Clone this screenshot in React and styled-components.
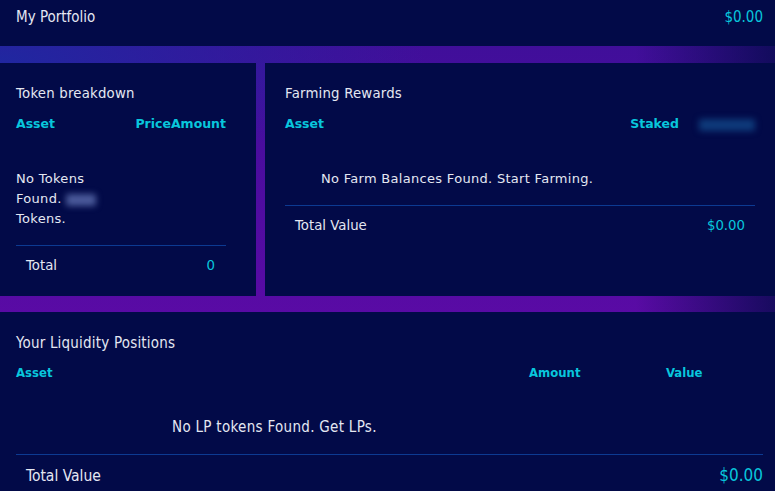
import React from 'react'
import styled, { createGlobalStyle } from 'styled-components'

const GlobalStyle = createGlobalStyle`
  html, body {
    margin: 0;
    padding: 0;
    background: #020a48;
  }
  * { box-sizing: border-box; }
`

const CYAN = '#08c6dc'
const PANEL = '#020a48'
const TEXT = '#e4e7f2'
const LINE = '#0c3a92'
const CONDENSED = '"DejaVu Sans Condensed", "DejaVu Sans", sans-serif'
const WIDE = '"DejaVu Sans", "Open Sans", sans-serif'

const Page = styled.div`
  width: 775px;
  min-height: 491px;
  display: flex;
  flex-direction: column;
  overflow: hidden;
  background:
    linear-gradient(to right, rgba(2, 10, 72, 0) 82%, rgba(2, 10, 72, 0.75) 100%),
    radial-gradient(ellipse 55% 22% at 0% 12%, rgba(30, 40, 160, 0.95), rgba(30, 40, 160, 0)),
    linear-gradient(to bottom, #3c0f98 0%, #6a08ac 100%);
`

const Header = styled.header`
  height: 46px;
  background: ${PANEL};
  display: flex;
  justify-content: space-between;
  padding: 8px 12px 0 16px;
  font-family: ${CONDENSED};
  font-size: 15px;
  line-height: 18px;
  color: ${TEXT};
`

const Money = styled.span`
  color: ${CYAN};
  font-size: ${(p) => (p.$size ? `${p.$size}px` : 'inherit')};
`

const Middle = styled.div`
  display: grid;
  grid-template-columns: 256px 1fr;
  column-gap: 9px;
  margin: 17px 0 16px;
  height: 233px;
`

const Panel = styled.section`
  background: ${PANEL};
  padding: 22px ${(p) => p.$right}px 0 ${(p) => p.$left}px;
  font-family: ${(p) => (p.$condensed ? CONDENSED : WIDE)};
  font-size: ${(p) => (p.$condensed ? 15 : 13.3)}px;
  color: ${TEXT};
`

const Bottom = styled(Panel)`
  flex: 1;
  padding-top: 22px;
`

const Title = styled.div`
  line-height: 18px;
  letter-spacing: 0.2px;
`

const HeadRow = styled.div`
  display: grid;
  grid-template-columns: ${(p) => p.$cols};
  margin-top: 12px;
  line-height: 18px;
  font-size: ${(p) => p.$size || 12.5}px;
  color: ${CYAN};
  font-weight: bold;
`

const Cell = styled.span`
  text-align: ${(p) => p.$align || 'left'};
`

const Empty = styled.div`
  margin-top: ${(p) => p.$top}px;
  padding-left: ${(p) => p.$indent || 0}px;
  line-height: 20px;
  letter-spacing: 0.3px;
  font-size: ${(p) => p.$size || 13}px;
  width: ${(p) => p.$width || 'auto'};
`

const Redacted = styled.span`
  display: inline-block;
  vertical-align: middle;
  width: ${(p) => p.$w}px;
  height: 12px;
  margin-left: ${(p) => p.$ml || 0}px;
  background: ${(p) => p.$color};
  filter: blur(3px);
  border-radius: 2px;
`

const Divider = styled.hr`
  border: 0;
  height: 1px;
  background: ${LINE};
  margin: ${(p) => p.$top}px 0 0;
`

const TotalRow = styled.div`
  display: flex;
  justify-content: space-between;
  align-items: baseline;
  margin-top: 11px;
  padding: 0 ${(p) => p.$inset}px 0 10px;
  line-height: 18px;
  font-size: ${(p) => p.$size || 13.3}px;
`

export default function App() {
  return (
    <>
      <GlobalStyle />
      <Page>
        <Header>
          <span>My Portfolio</span>
          <Money>$0.00</Money>
        </Header>

        <Middle>
          <Panel $left={16} $right={30}>
            <Title>Token breakdown</Title>
            <HeadRow $cols="1fr auto auto">
              <span>Asset</span>
              <span>Price</span>
              <span>Amount</span>
            </HeadRow>
            <Empty $top={36} $width="90px">
              No Tokens
              <br />
              Found.
              <Redacted $w={30} $ml={4} $color="#4a5a9a" />
              <br />
              Tokens.
            </Empty>
            <Divider $top={16} />
            <TotalRow $inset={11}>
              <span>Total</span>
              <Money>0</Money>
            </TotalRow>
          </Panel>

          <Panel $left={20} $right={20}>
            <Title>Farming Rewards</Title>
            <HeadRow $cols="1fr auto 76px">
              <span>Asset</span>
              <span>Staked</span>
              <Cell $align="right">
                <Redacted $w={56} $color="#0e3a7a" />
              </Cell>
            </HeadRow>
            <Empty $top={36} $indent={36}>
              No Farm Balances Found. Start Farming.
            </Empty>
            <Divider $top={16} />
            <TotalRow $inset={10}>
              <span>Total Value</span>
              <Money>$0.00</Money>
            </TotalRow>
          </Panel>
        </Middle>

        <Bottom $left={16} $right={12} $condensed>
          <Title>Your Liquidity Positions</Title>
          <HeadRow $cols="1fr 137px 97px" $size={13}>
            <span>Asset</span>
            <span>Amount</span>
            <span>Value</span>
          </HeadRow>
          <Empty $top={35} $indent={156} $size={15}>
            No LP tokens Found. Get LPs.
          </Empty>
          <Divider $top={17} />
          <TotalRow $inset={0} $size={15.5}>
            <span>Total Value</span>
            <Money $size={17}>$0.00</Money>
          </TotalRow>
        </Bottom>
      </Page>
    </>
  )
}
